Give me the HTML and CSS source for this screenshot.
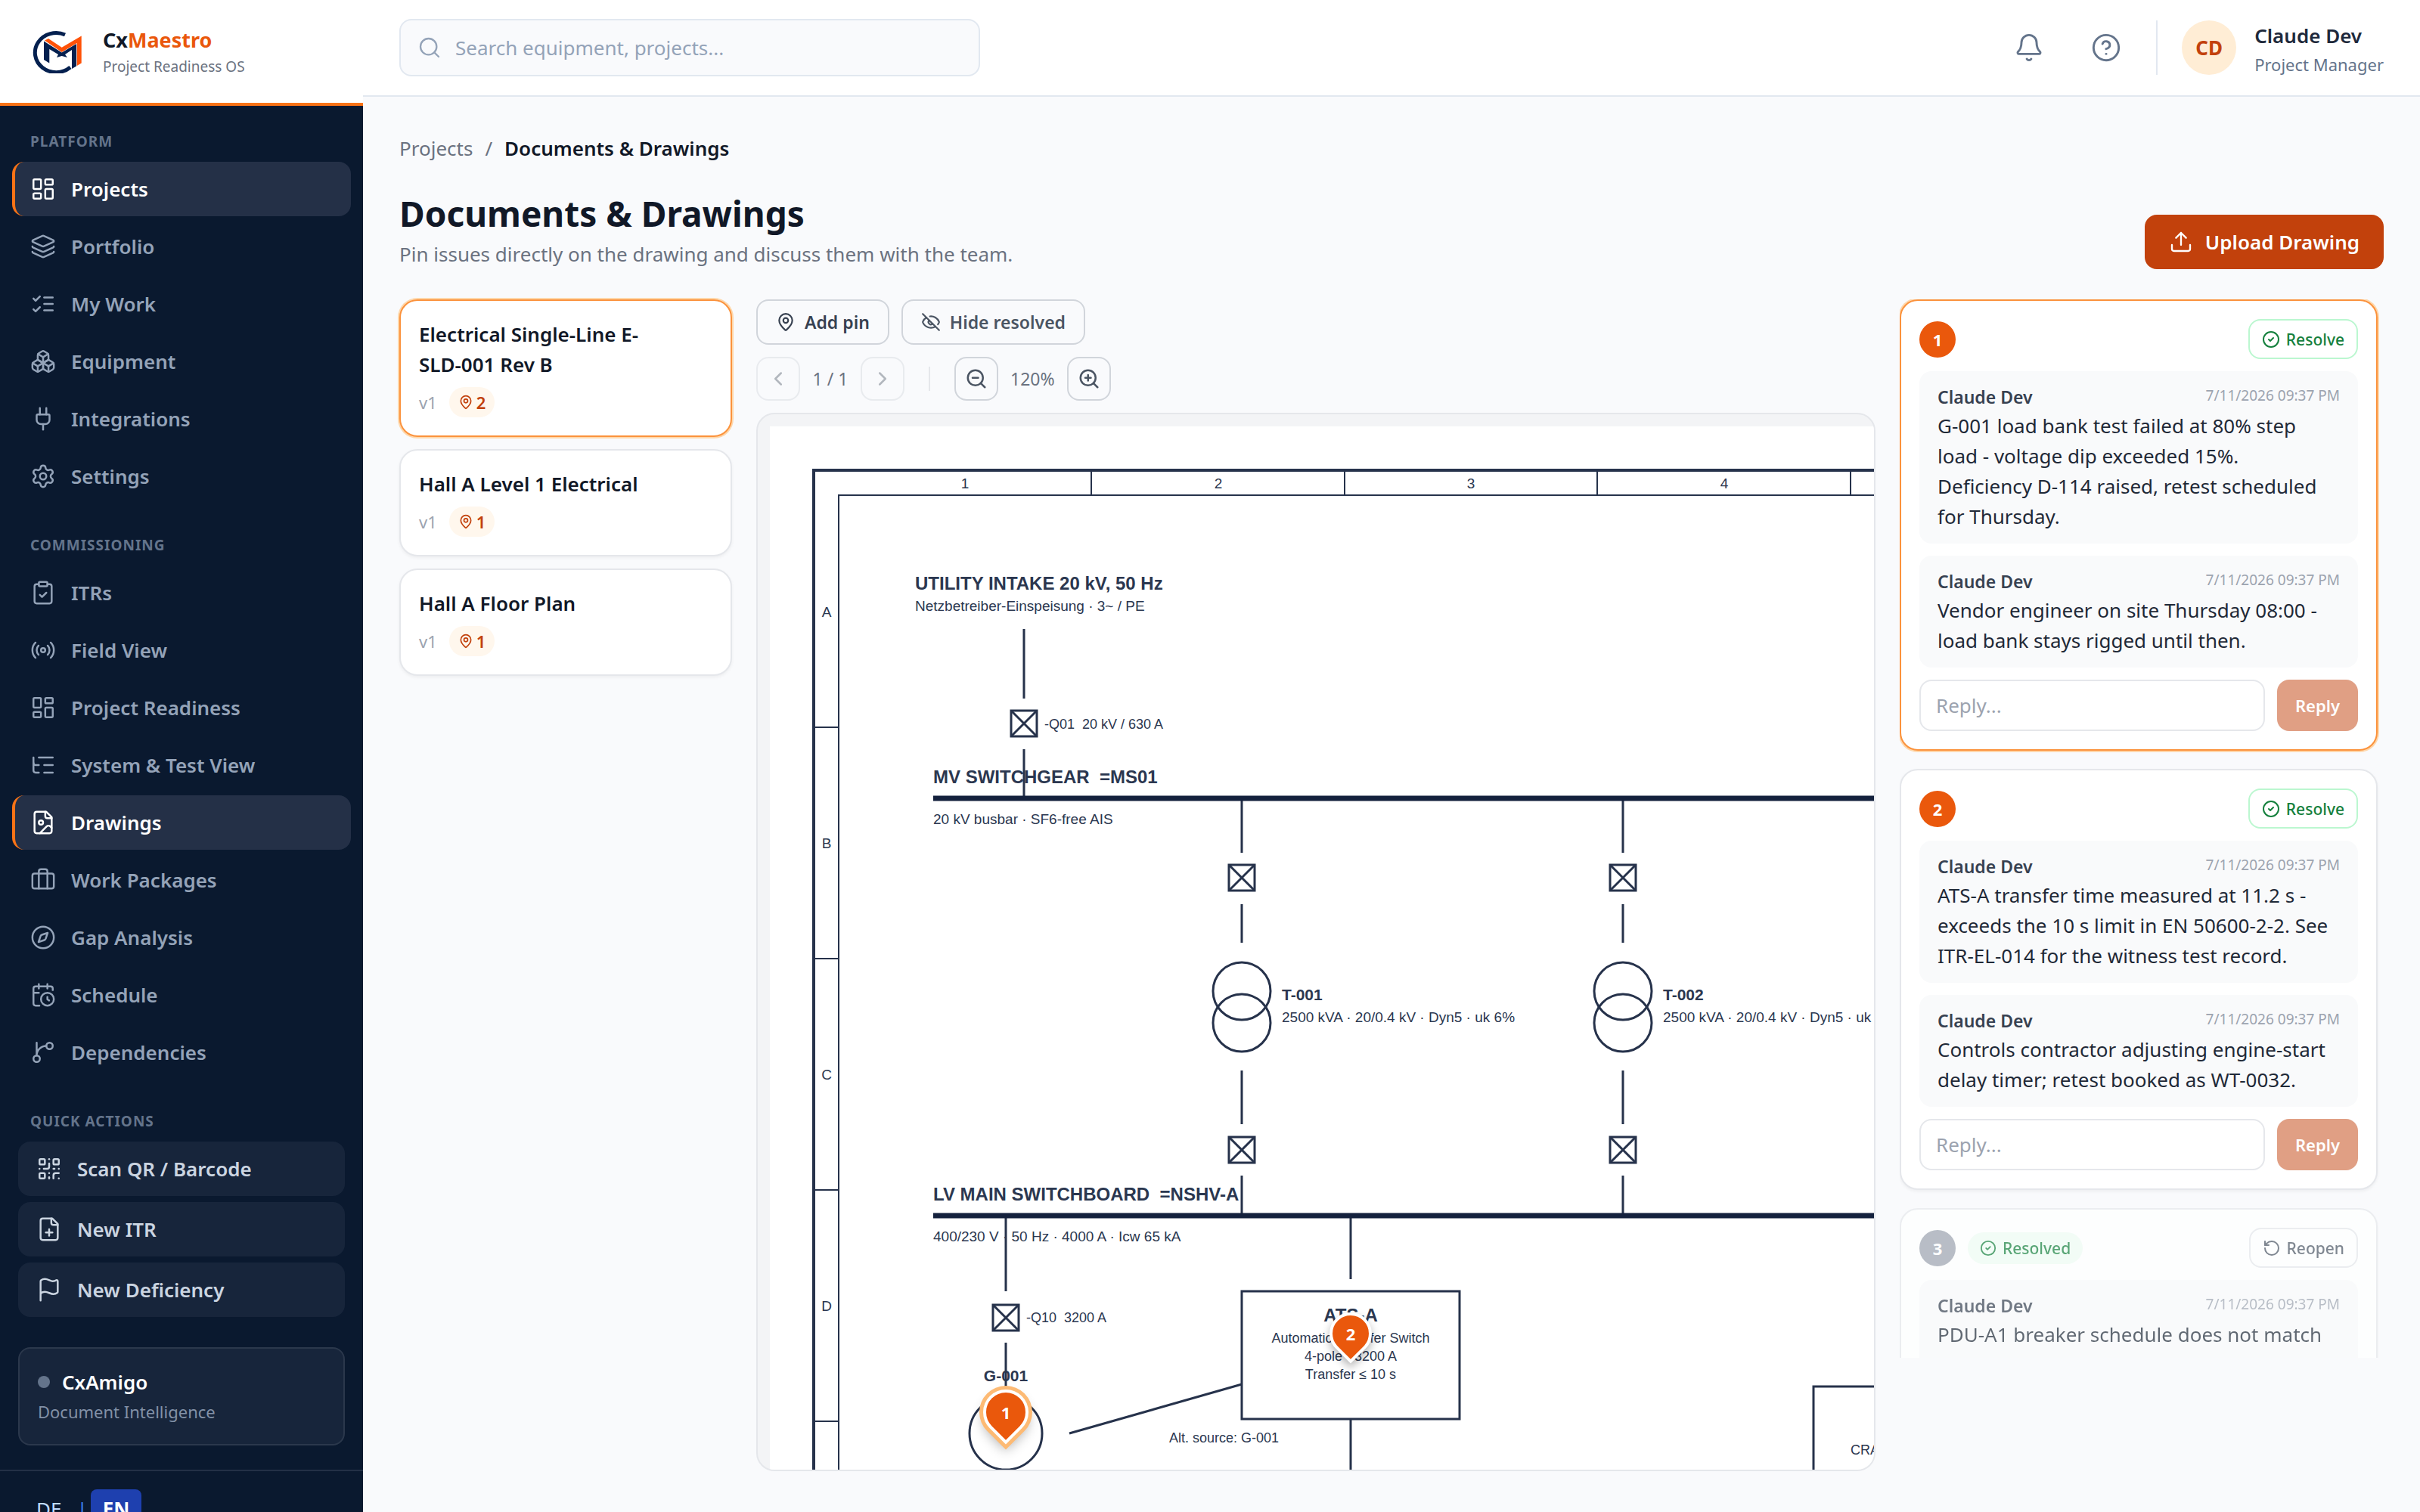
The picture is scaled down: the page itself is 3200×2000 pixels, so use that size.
FILE: index.html
```html
<!DOCTYPE html>
<html lang="en">
<head>
    <meta charset="UTF-8">
    <meta name="viewport" content="width=device-width, initial-scale=1.0">
    <title>CxMaestro - Documents &amp; Drawings</title>
    <link rel="stylesheet" href="styles.css">
</head>
<body>

<!-- icon sprite -->
<svg class="sprite" aria-hidden="true">
    <symbol id="i-dashboard" viewBox="0 0 24 24"><rect x="3" y="3" width="7" height="9" rx="1"/><rect x="14" y="3" width="7" height="5" rx="1"/><rect x="14" y="12" width="7" height="9" rx="1"/><rect x="3" y="16" width="7" height="5" rx="1"/></symbol>
    <symbol id="i-layers" viewBox="0 0 24 24"><path d="M12.83 2.18a2 2 0 0 0-1.66 0L2.6 6.08a1 1 0 0 0 0 1.83l8.58 3.91a2 2 0 0 0 1.66 0l8.58-3.9a1 1 0 0 0 0-1.83Z"/><path d="M2 12a1 1 0 0 0 .58.91l8.6 3.91a2 2 0 0 0 1.65 0l8.58-3.9A1 1 0 0 0 22 12"/><path d="M2 17a1 1 0 0 0 .58.91l8.6 3.91a2 2 0 0 0 1.65 0l8.58-3.9A1 1 0 0 0 22 17"/></symbol>
    <symbol id="i-checks" viewBox="0 0 24 24"><path d="m3 17 2 2 4-4"/><path d="m3 7 2 2 4-4"/><path d="M13 6h8"/><path d="M13 12h8"/><path d="M13 18h8"/></symbol>
    <symbol id="i-boxes" viewBox="0 0 24 24"><path d="M2.97 12.92A2 2 0 0 0 2 14.63v3.24a2 2 0 0 0 .97 1.71l3 1.8a2 2 0 0 0 2.06 0L12 19v-5.5l-5-3-4.03 2.42Z"/><path d="m7 16.5-4.74-2.85"/><path d="m7 16.5 5-3"/><path d="M7 16.5v5.17"/><path d="M12 13.5V19l3.97 2.38a2 2 0 0 0 2.06 0l3-1.8a2 2 0 0 0 .97-1.71v-3.24a2 2 0 0 0-.97-1.71L17 10.5l-5 3Z"/><path d="m17 16.5-5-3"/><path d="m17 16.5 4.74-2.85"/><path d="M17 16.5v5.17"/><path d="M7.97 4.42A2 2 0 0 0 7 6.13v4.37l5 3 5-3V6.13a2 2 0 0 0-.97-1.71l-3-1.8a2 2 0 0 0-2.06 0l-3 1.8Z"/><path d="M12 8 7.26 5.15"/><path d="m12 8 4.74-2.85"/><path d="M12 13.5V8"/></symbol>
    <symbol id="i-plug" viewBox="0 0 24 24"><path d="M12 22v-5"/><path d="M15 8V2"/><path d="M17 8a1 1 0 0 1 1 1v4a4 4 0 0 1-4 4h-4a4 4 0 0 1-4-4V9a1 1 0 0 1 1-1z"/><path d="M9 8V2"/></symbol>
    <symbol id="i-settings" viewBox="0 0 24 24"><path d="M9.671 4.136a2.34 2.34 0 0 1 4.659 0 2.34 2.34 0 0 0 3.319 1.915 2.34 2.34 0 0 1 2.33 4.033 2.34 2.34 0 0 0 0 3.831 2.34 2.34 0 0 1-2.33 4.033 2.34 2.34 0 0 0-3.319 1.915 2.34 2.34 0 0 1-4.659 0 2.34 2.34 0 0 0-3.32-1.915 2.34 2.34 0 0 1-2.33-4.033 2.34 2.34 0 0 0 0-3.831A2.34 2.34 0 0 1 6.35 6.051a2.34 2.34 0 0 0 3.319-1.915"/><circle cx="12" cy="12" r="3"/></symbol>
    <symbol id="i-clipboard" viewBox="0 0 24 24"><rect x="8" y="2" width="8" height="4" rx="1"/><path d="M16 4h2a2 2 0 0 1 2 2v14a2 2 0 0 1-2 2H6a2 2 0 0 1-2-2V6a2 2 0 0 1 2-2h2"/><path d="m9 14 2 2 4-4"/></symbol>
    <symbol id="i-radio" viewBox="0 0 24 24"><path d="M16.247 7.761a6 6 0 0 1 0 8.478"/><path d="M19.075 4.933a10 10 0 0 1 0 14.134"/><path d="M4.925 19.067a10 10 0 0 1 0-14.134"/><path d="M7.753 16.239a6 6 0 0 1 0-8.478"/><circle cx="12" cy="12" r="2"/></symbol>
    <symbol id="i-tree" viewBox="0 0 24 24"><path d="M8 5h13"/><path d="M13 12h8"/><path d="M13 19h8"/><path d="M3 10a2 2 0 0 0 2 2h3"/><path d="M3 5v12a2 2 0 0 0 2 2h3"/></symbol>
    <symbol id="i-file-image" viewBox="0 0 24 24"><path d="M15 2H6a2 2 0 0 0-2 2v16a2 2 0 0 0 2 2h12a2 2 0 0 0 2-2V7Z"/><path d="M14 2v4a2 2 0 0 0 2 2h4"/><circle cx="10" cy="12" r="2"/><path d="m20 17-1.296-1.296a2.41 2.41 0 0 0-3.408 0L9 22"/></symbol>
    <symbol id="i-briefcase" viewBox="0 0 24 24"><path d="M16 20V4a2 2 0 0 0-2-2h-4a2 2 0 0 0-2 2v16"/><rect x="2" y="6" width="20" height="14" rx="2"/></symbol>
    <symbol id="i-compass" viewBox="0 0 24 24"><circle cx="12" cy="12" r="10"/><path d="m16.24 7.76-1.804 5.411a2 2 0 0 1-1.265 1.265L7.76 16.24l1.804-5.411a2 2 0 0 1 1.265-1.265z"/></symbol>
    <symbol id="i-calendar" viewBox="0 0 24 24"><path d="M16 14v2.2l1.6 1"/><path d="M16 2v4"/><path d="M21 7.5V6a2 2 0 0 0-2-2H5a2 2 0 0 0-2 2v14a2 2 0 0 0 2 2h3.5"/><path d="M3 10h5"/><path d="M8 2v4"/><circle cx="16" cy="16" r="6"/></symbol>
    <symbol id="i-branch" viewBox="0 0 24 24"><path d="M15 6a9 9 0 0 0-9 9V3"/><circle cx="18" cy="6" r="3"/><circle cx="6" cy="18" r="3"/></symbol>
    <symbol id="i-qr" viewBox="0 0 24 24"><rect x="3" y="3" width="5" height="5" rx="1"/><rect x="16" y="3" width="5" height="5" rx="1"/><rect x="3" y="16" width="5" height="5" rx="1"/><path d="M21 16h-3a2 2 0 0 0-2 2v3"/><path d="M21 21v.01"/><path d="M12 7v3a2 2 0 0 1-2 2H7"/><path d="M3 12h.01"/><path d="M12 3h.01"/><path d="M12 16v.01"/><path d="M16 12h1"/><path d="M21 12v.01"/><path d="M12 21v-1"/></symbol>
    <symbol id="i-file-plus" viewBox="0 0 24 24"><path d="M15 2H6a2 2 0 0 0-2 2v16a2 2 0 0 0 2 2h12a2 2 0 0 0 2-2V7Z"/><path d="M14 2v4a2 2 0 0 0 2 2h4"/><path d="M9 15h6"/><path d="M12 18v-6"/></symbol>
    <symbol id="i-flag" viewBox="0 0 24 24"><path d="M4 22V4a1 1 0 0 1 .4-.8A6 6 0 0 1 8 2c3 0 5 2 7.333 2q2 0 3.067-.8A1 1 0 0 1 20 4v10a1 1 0 0 1-.4.8A6 6 0 0 1 16 16c-3 0-5-2-8-2a6 6 0 0 0-4 1.528"/></symbol>
    <symbol id="i-search" viewBox="0 0 24 24"><circle cx="11" cy="11" r="8"/><path d="m21 21-4.34-4.34"/></symbol>
    <symbol id="i-bell" viewBox="0 0 24 24"><path d="M10.268 21a2 2 0 0 0 3.464 0"/><path d="M3.262 15.326A1 1 0 0 0 4 17h16a1 1 0 0 0 .74-1.673C19.41 13.956 18 12.499 18 8A6 6 0 0 0 6 8c0 4.499-1.411 5.956-2.738 7.326"/></symbol>
    <symbol id="i-help" viewBox="0 0 24 24"><circle cx="12" cy="12" r="10"/><path d="M9.09 9a3 3 0 0 1 5.83 1c0 2-3 3-3 3"/><path d="M12 17h.01"/></symbol>
    <symbol id="i-upload" viewBox="0 0 24 24"><path d="M12 3v12"/><path d="m17 8-5-5-5 5"/><path d="M21 15v4a2 2 0 0 1-2 2H5a2 2 0 0 1-2-2v-4"/></symbol>
    <symbol id="i-pin" viewBox="0 0 24 24"><path d="M20 10c0 4.993-5.539 10.193-7.399 11.799a1 1 0 0 1-1.202 0C9.539 20.193 4 14.993 4 10a8 8 0 0 1 16 0"/><circle cx="12" cy="10" r="3"/></symbol>
    <symbol id="i-eye-off" viewBox="0 0 24 24"><path d="M10.733 5.076a10.744 10.744 0 0 1 11.205 6.575 1 1 0 0 1 0 .696 10.747 10.747 0 0 1-1.444 2.49"/><path d="M14.084 14.158a3 3 0 0 1-4.242-4.242"/><path d="M17.479 17.499a10.75 10.75 0 0 1-15.417-5.151 1 1 0 0 1 0-.696 10.75 10.75 0 0 1 4.446-5.143"/><path d="m2 2 20 20"/></symbol>
    <symbol id="i-left" viewBox="0 0 24 24"><path d="m15 18-6-6 6-6"/></symbol>
    <symbol id="i-right" viewBox="0 0 24 24"><path d="m9 18 6-6-6-6"/></symbol>
    <symbol id="i-zoom-out" viewBox="0 0 24 24"><circle cx="11" cy="11" r="8"/><path d="m21 21-4.35-4.35"/><path d="M8 11h6"/></symbol>
    <symbol id="i-zoom-in" viewBox="0 0 24 24"><circle cx="11" cy="11" r="8"/><path d="m21 21-4.35-4.35"/><path d="M8 11h6"/><path d="M11 8v6"/></symbol>
    <symbol id="i-check" viewBox="0 0 24 24"><circle cx="12" cy="12" r="10"/><path d="m9 12 2 2 4-4"/></symbol>
    <symbol id="i-reopen" viewBox="0 0 24 24"><path d="M3 12a9 9 0 1 0 9-9 9.75 9.75 0 0 0-6.74 2.74L3 8"/><path d="M3 3v5h5"/></symbol>
</svg>

<div class="app">
    <aside class="sidebar">
        <div class="brand">
            <svg class="brand-logo" viewBox="0 0 66 58">
                <path d="M44 7A28 26 0 1 0 51 50" fill="none" stroke="#04204f" stroke-width="5"/>
                <path d="M16 15.5 39.7 30.5 59 19V48.5L53 52V27L44 33 47 37 39.7 35 33 37 35 33 23.3 26V44.5L16 40Z" fill="#04204f"/>
                <path d="M17 14.5 22 12 39.7 23.7 65.7 8.5V44.5L59.7 48V18L39.7 30Z" fill="#ff5208"/>
            </svg>
            <div>
                <div class="brand-name">Cx<span>Maestro</span></div>
                <div class="brand-sub">Project Readiness OS</div>
            </div>
        </div>

        <nav class="nav">
            <h2 class="nav-label">Platform</h2>
            <a class="nav-item active" href="#"><svg class="icon"><use href="#i-dashboard"/></svg>Projects</a>
            <a class="nav-item" href="#"><svg class="icon"><use href="#i-layers"/></svg>Portfolio</a>
            <a class="nav-item" href="#"><svg class="icon"><use href="#i-checks"/></svg>My Work</a>
            <a class="nav-item" href="#"><svg class="icon"><use href="#i-boxes"/></svg>Equipment</a>
            <a class="nav-item" href="#"><svg class="icon"><use href="#i-plug"/></svg>Integrations</a>
            <a class="nav-item" href="#"><svg class="icon"><use href="#i-settings"/></svg>Settings</a>
        </nav>

        <nav class="nav">
            <h2 class="nav-label">Commissioning</h2>
            <a class="nav-item" href="#"><svg class="icon"><use href="#i-clipboard"/></svg>ITRs</a>
            <a class="nav-item" href="#"><svg class="icon"><use href="#i-radio"/></svg>Field View</a>
            <a class="nav-item" href="#"><svg class="icon"><use href="#i-dashboard"/></svg>Project Readiness</a>
            <a class="nav-item" href="#"><svg class="icon"><use href="#i-tree"/></svg>System &amp; Test View</a>
            <a class="nav-item active" href="#"><svg class="icon"><use href="#i-file-image"/></svg>Drawings</a>
            <a class="nav-item" href="#"><svg class="icon"><use href="#i-briefcase"/></svg>Work Packages</a>
            <a class="nav-item" href="#"><svg class="icon"><use href="#i-compass"/></svg>Gap Analysis</a>
            <a class="nav-item" href="#"><svg class="icon"><use href="#i-calendar"/></svg>Schedule</a>
            <a class="nav-item" href="#"><svg class="icon"><use href="#i-branch"/></svg>Dependencies</a>
        </nav>

        <div class="quick">
            <h2 class="nav-label">Quick Actions</h2>
            <button class="quick-btn" type="button"><svg class="icon"><use href="#i-qr"/></svg>Scan QR / Barcode</button>
            <button class="quick-btn" type="button"><svg class="icon"><use href="#i-file-plus"/></svg>New ITR</button>
            <button class="quick-btn" type="button"><svg class="icon"><use href="#i-flag"/></svg>New Deficiency</button>
        </div>

        <div class="amigo">
            <div class="amigo-name"><span class="dot"></span>CxAmigo</div>
            <div class="amigo-sub">Document Intelligence</div>
        </div>

        <div class="lang">
            <button class="lang-btn" type="button">DE</button>
            <span class="lang-sep">|</span>
            <button class="lang-btn active" type="button">EN</button>
        </div>
    </aside>

    <div class="page">
        <header class="topbar">
            <label class="search">
                <svg class="icon"><use href="#i-search"/></svg>
                <input type="text" placeholder="Search equipment, projects..." aria-label="Search">
            </label>
            <div class="topbar-right">
                <button class="icon-btn" type="button" aria-label="Notifications"><svg class="icon"><use href="#i-bell"/></svg></button>
                <button class="icon-btn" type="button" aria-label="Help"><svg class="icon"><use href="#i-help"/></svg></button>
                <div class="user">
                    <span class="avatar">CD</span>
                    <div class="user-text">
                        <div class="user-name">Claude Dev</div>
                        <div class="user-role">Project Manager</div>
                    </div>
                </div>
            </div>
        </header>

        <main class="content">
            <div class="breadcrumb"><a href="#">Projects</a><span>/</span><strong>Documents &amp; Drawings</strong></div>

            <div class="page-head">
                <div>
                    <h1>Documents &amp; Drawings</h1>
                    <p>Pin issues directly on the drawing and discuss them with the team.</p>
                </div>
                <button class="upload-btn" type="button"><svg class="icon"><use href="#i-upload"/></svg>Upload Drawing</button>
            </div>

            <div class="columns">
                <div class="docs">
                    <button class="doc selected" type="button">
                        <span class="doc-title">Electrical Single-Line E-<wbr><span class="nowrap">SLD-001 Rev B</span></span>
                        <span class="doc-meta">v1 <span class="doc-pins"><svg class="icon"><use href="#i-pin"/></svg>2</span></span>
                    </button>
                    <button class="doc" type="button">
                        <span class="doc-title">Hall A Level 1 Electrical</span>
                        <span class="doc-meta">v1 <span class="doc-pins"><svg class="icon"><use href="#i-pin"/></svg>1</span></span>
                    </button>
                    <button class="doc" type="button">
                        <span class="doc-title">Hall A Floor Plan</span>
                        <span class="doc-meta">v1 <span class="doc-pins"><svg class="icon"><use href="#i-pin"/></svg>1</span></span>
                    </button>
                </div>

                <section class="viewer">
                    <div class="tools">
                        <button class="tool-btn dark" type="button"><svg class="icon"><use href="#i-pin"/></svg>Add pin</button>
                        <button class="tool-btn" type="button"><svg class="icon"><use href="#i-eye-off"/></svg>Hide resolved</button>
                    </div>
                    <div class="tools">
                        <button class="square-btn" type="button" aria-label="Previous page" disabled><svg class="icon"><use href="#i-left"/></svg></button>
                        <span class="tool-text">1 / 1</span>
                        <button class="square-btn" type="button" aria-label="Next page" disabled><svg class="icon"><use href="#i-right"/></svg></button>
                        <span class="tool-sep"></span>
                        <button class="square-btn" type="button" aria-label="Zoom out"><svg class="icon"><use href="#i-zoom-out"/></svg></button>
                        <span class="tool-text">120%</span>
                        <button class="square-btn" type="button" aria-label="Zoom in"><svg class="icon"><use href="#i-zoom-in"/></svg></button>
                    </div>

                    <div class="canvas">
                        <div class="sheet">
                            <svg class="drawing" viewBox="0 0 2200 1600" width="2200" height="1600">
                                <defs>
                                    <g id="breaker"><rect x="-17" y="-17" width="34" height="34"/><path d="M-17-17 17 17M17-17-17 17"/></g>
                                    <g id="feeder">
                                        <path d="M0 494V564M0 632V683M0 852V923M0 991V1044"/>
                                        <use href="#breaker" y="597"/>
                                        <circle cy="747" r="38"/>
                                        <circle cy="789" r="38"/>
                                        <use href="#breaker" y="957"/>
                                    </g>
                                </defs>

                                <!-- frame and grid references -->
                                <path class="frame" d="M58 1600V58H2200"/>
                                <path class="thin" d="M91 1600V91H2200"/>
                                <path class="thin" d="M425 58V91M760 58V91M1094 58V91M1429 58V91M58 398H91M58 704H91M58 1010H91M58 1316H91"/>
                                <g class="t-ref">
                                    <text x="258" y="82">1</text><text x="593" y="82">2</text><text x="927" y="82">3</text><text x="1262" y="82">4</text>
                                    <text x="75" y="252">A</text><text x="75" y="558">B</text><text x="75" y="864">C</text><text x="75" y="1170">D</text>
                                </g>

                                <!-- lines and symbols -->
                                <g class="wire">
                                    <path d="M336 268V360M336 427V490"/>
                                    <use href="#breaker" x="336" y="393"/>
                                    <use href="#feeder" x="624"/>
                                    <use href="#feeder" x="1128"/>
                                    <path d="M312 1046V1144M312 1212V1283"/>
                                    <use href="#breaker" x="312" y="1179"/>
                                    <circle cx="312" cy="1332" r="48"/>
                                    <path d="M768 1046V1128M768 1313V1600M396 1332 624 1267"/>
                                    <rect x="624" y="1144" width="288" height="169"/>
                                    <rect x="1380" y="1270" width="288" height="169"/>
                                </g>
                                <path class="bus" d="M216 492H2100M216 1044H2100"/>

                                <g class="t-head">
                                    <text x="192" y="216">UTILITY INTAKE 20 kV, 50 Hz</text>
                                    <text x="216" y="472">MV SWITCHGEAR &#160;=MS01</text>
                                    <text x="216" y="1024">LV MAIN SWITCHBOARD &#160;=NSHV-A</text>
                                    <text class="mid" x="768" y="1184">ATS-A</text>
                                </g>
                                <g class="t-name">
                                    <text x="677" y="759">T-001</text>
                                    <text x="1181" y="759">T-002</text>
                                    <text class="mid" x="312" y="1263">G-001</text>
                                </g>
                                <g class="t-note">
                                    <text x="192" y="244">Netzbetreiber-Einspeisung · 3~ / PE</text>
                                    <text x="216" y="526">20 kV busbar · SF6-free AIS</text>
                                    <text x="677" y="788">2500 kVA · 20/0.4 kV · Dyn5 · uk 6%</text>
                                    <text x="1181" y="788">2500 kVA · 20/0.4 kV · Dyn5 · uk 6%</text>
                                    <text x="216" y="1078">400/230 V · 50 Hz · 4000 A · Icw 65 kA</text>
                                </g>
                                <g class="t-small">
                                    <text x="363" y="400">-Q01 &#160;20 kV / 630 A</text>
                                    <text x="339" y="1185">-Q10 &#160;3200 A</text>
                                    <text class="mid" x="768" y="1212">Automatic Transfer Switch</text>
                                    <text class="mid" x="768" y="1236">4-pole · 3200 A</text>
                                    <text class="mid" x="768" y="1260">Transfer ≤ 10 s</text>
                                    <text x="528" y="1344">Alt. source: G-001</text>
                                    <text x="1429" y="1360">CRAC units</text>
                                </g>
                            </svg>
                            <button class="pin pin-one selected" type="button"><span>1</span></button>
                            <button class="pin pin-two" type="button"><span>2</span></button>
                        </div>
                    </div>
                </section>

                <div class="threads">
                    <article class="thread selected">
                        <div class="thread-head">
                            <span class="num">1</span>
                            <button class="state-btn resolve" type="button"><svg class="icon"><use href="#i-check"/></svg>Resolve</button>
                        </div>
                        <div class="comment">
                            <div class="comment-head"><strong>Claude Dev</strong><time>7/11/2026 09:37 PM</time></div>
                            <p>G-001 load bank test failed at 80% step load - voltage dip exceeded 15%. Deficiency D-114 raised, retest scheduled for Thursday.</p>
                        </div>
                        <div class="comment">
                            <div class="comment-head"><strong>Claude Dev</strong><time>7/11/2026 09:37 PM</time></div>
                            <p>Vendor engineer on site Thursday 08:00 - load bank stays rigged until then.</p>
                        </div>
                        <form class="reply">
                            <input type="text" placeholder="Reply..." aria-label="Reply to issue 1">
                            <button type="button" disabled>Reply</button>
                        </form>
                    </article>

                    <article class="thread">
                        <div class="thread-head">
                            <span class="num">2</span>
                            <button class="state-btn resolve" type="button"><svg class="icon"><use href="#i-check"/></svg>Resolve</button>
                        </div>
                        <div class="comment">
                            <div class="comment-head"><strong>Claude Dev</strong><time>7/11/2026 09:37 PM</time></div>
                            <p>ATS-A transfer time measured at 11.2 s - exceeds the 10 s limit in EN 50600-2-2. See ITR-EL-014 for the witness test record.</p>
                        </div>
                        <div class="comment">
                            <div class="comment-head"><strong>Claude Dev</strong><time>7/11/2026 09:37 PM</time></div>
                            <p>Controls contractor adjusting engine-start delay timer; retest booked as WT-0032.</p>
                        </div>
                        <form class="reply">
                            <input type="text" placeholder="Reply..." aria-label="Reply to issue 2">
                            <button type="button" disabled>Reply</button>
                        </form>
                    </article>

                    <article class="thread resolved">
                        <div class="thread-head">
                            <span class="num">3</span>
                            <span class="resolved-tag"><svg class="icon"><use href="#i-check"/></svg>Resolved</span>
                            <button class="state-btn" type="button"><svg class="icon"><use href="#i-reopen"/></svg>Reopen</button>
                        </div>
                        <div class="comment">
                            <div class="comment-head"><strong>Claude Dev</strong><time>7/11/2026 09:37 PM</time></div>
                            <p>PDU-A1 breaker schedule does not match panel labelling - revision A issued.</p>
                        </div>
                    </article>
                </div>
            </div>
        </main>
    </div>
</div>

</body>
</html>
```
FILE: styles.css
```css
* {
    box-sizing: border-box;
}
body {
    margin: 0;
    font-family: "Noto Sans", "Open Sans", sans-serif;
    font-size: 26px;
    line-height: 40px;
    color: #111827;
    background-color: #f9fafc;
}
h1, h2, p {
    margin: 0;
}
a {
    color: inherit;
    text-decoration: none;
}
button, input {
    font: inherit;
    color: inherit;
    margin: 0;
}
button {
    border: none;
    background: none;
    padding: 0;
    text-align: left;
}
.sprite {
    display: none;
}
.nowrap {
    white-space: nowrap;
}
.icon {
    width: 34px;
    height: 34px;
    flex: none;
    fill: none;
    stroke: currentColor;
    stroke-width: 1.75;
    stroke-linecap: round;
    stroke-linejoin: round;
}
.app {
    display: flex;
    height: 100vh;
    overflow: hidden;
}

/* sidebar */
.sidebar {
    width: 480px;
    flex: none;
    display: flex;
    flex-direction: column;
    overflow: hidden;
    background-color: #0a192f;
}
.sidebar > * {
    flex: none;
}
.brand {
    height: 140px;
    display: flex;
    align-items: center;
    gap: 28px;
    padding: 0 42px;
    background-color: #fff;
    border-bottom: 4px solid #f97316;
}
.brand-logo {
    width: 66px;
    height: 58px;
}
.brand-name {
    font-size: 27px;
    font-weight: 700;
    line-height: 40px;
}
.brand-name span {
    color: #ea580c;
}
.brand-sub {
    font-size: 19px;
    line-height: 30px;
    color: #6b7280;
}
.nav {
    display: flex;
    flex-direction: column;
    gap: 4px;
    padding: 0 16px 8px;
    margin-top: 32px;
}
.nav-label {
    font-size: 19px;
    line-height: 30px;
    font-weight: 700;
    letter-spacing: 1px;
    text-transform: uppercase;
    color: #64748b;
    padding: 0 24px 8px;
}
.nav-item {
    height: 72px;
    display: flex;
    align-items: center;
    gap: 20px;
    padding: 0 20px;
    border-left: 4px solid transparent;
    border-radius: 16px;
    font-weight: 600;
    color: #94a3b8;
}
.nav-item.active {
    color: #fff;
    background-color: #243047;
    border-left-color: #f97316;
}
.quick {
    display: flex;
    flex-direction: column;
    gap: 8px;
    padding: 0 24px;
    margin-top: 32px;
}
.quick .nav-label {
    padding: 0 16px 4px;
}
.quick-btn {
    height: 72px;
    display: flex;
    align-items: center;
    gap: 20px;
    padding: 0 24px;
    border-radius: 16px;
    font-weight: 600;
    color: #cbd5e1;
    background-color: #17253b;
}
.amigo {
    margin: 40px 24px 32px;
    padding: 24px;
    border: 2px solid #2b384c;
    border-radius: 16px;
    background-color: #17253b;
}
.amigo-name {
    display: flex;
    align-items: center;
    gap: 16px;
    font-weight: 600;
    color: #fff;
}
.dot {
    width: 16px;
    height: 16px;
    border-radius: 50%;
    background-color: #64748b;
}
.amigo-sub {
    font-size: 22px;
    line-height: 38px;
    color: #8291a7;
}
.lang {
    display: flex;
    align-items: center;
    gap: 4px;
    padding: 24px 32px;
    border-top: 2px solid #233046;
    line-height: 36px;
    color: #3b82f6;
}
.lang-btn {
    padding: 8px 16px;
    border-radius: 8px;
    color: #bfdbfe;
}
.lang-btn.active {
    font-weight: 700;
    color: #fff;
    background-color: #1e40af;
}

/* top bar */
.page {
    flex: 1;
    min-width: 0;
    display: flex;
    flex-direction: column;
}
.topbar {
    height: 128px;
    flex: none;
    display: flex;
    align-items: center;
    justify-content: space-between;
    padding: 0 48px;
    background-color: #fff;
    border-bottom: 2px solid #e2e8f0;
}
.search {
    width: 768px;
    height: 76px;
    display: flex;
    align-items: center;
    gap: 18px;
    padding: 0 22px;
    border: 2px solid #e2e8f0;
    border-radius: 16px;
    background-color: #f9fafc;
    color: #94a3b8;
}
.search .icon {
    width: 32px;
    height: 32px;
}
.search input {
    flex: 1;
    border: none;
    outline: none;
    padding: 0;
    background: none;
}
input::placeholder {
    color: #94a3b8;
    opacity: 1;
}
.topbar-right {
    display: flex;
    align-items: center;
}
.icon-btn {
    display: flex;
    padding: 16px;
    margin-right: 30px;
    color: #64748b;
}
.icon-btn .icon {
    width: 40px;
    height: 40px;
}
.user {
    height: 72px;
    display: flex;
    align-items: center;
    gap: 24px;
    padding-left: 32px;
    border-left: 2px solid #e2e8f0;
}
.avatar {
    width: 72px;
    height: 72px;
    display: flex;
    align-items: center;
    justify-content: center;
    border-radius: 50%;
    font-weight: 700;
    color: #c2410c;
    background-color: #ffedd5;
}
.user-text {
    padding-top: 4px;
}
.user-name {
    font-weight: 600;
    color: #1e293b;
}
.user-role {
    font-size: 22px;
    line-height: 36px;
    color: #64748b;
}

/* content */
.content {
    flex: 1;
    min-height: 0;
    padding: 48px;
}
.breadcrumb {
    display: flex;
    gap: 16px;
    color: #6b7280;
}
.breadcrumb strong {
    font-weight: 600;
    color: #111827;
}
.page-head {
    display: flex;
    align-items: flex-end;
    justify-content: space-between;
    margin: 32px 0 40px;
}
h1 {
    font-size: 46px;
    line-height: 68px;
    font-weight: 700;
}
.page-head p {
    color: #6b7280;
}
.upload-btn {
    height: 72px;
    display: flex;
    align-items: center;
    gap: 16px;
    padding: 0 32px;
    border-radius: 16px;
    font-weight: 600;
    color: #fff;
    background-color: #c2410c;
}
.upload-btn .icon {
    width: 32px;
    height: 32px;
}
.columns {
    display: grid;
    grid-template-columns: 440px 1fr 640px;
    gap: 32px;
    align-items: start;
}

/* drawing list */
.docs {
    display: flex;
    flex-direction: column;
    gap: 16px;
}
.doc {
    display: flex;
    flex-direction: column;
    gap: 10px;
    padding: 24px;
    border: 2px solid #e5e7eb;
    border-radius: 24px;
    background-color: #fff;
    box-shadow: 0 2px 4px rgba(0, 0, 0, 0.05);
}
.doc.selected {
    border-color: #fb923c;
    box-shadow: 0 0 0 2px #fed7aa;
}
.doc-title {
    font-weight: 600;
}
.doc-meta {
    display: flex;
    align-items: center;
    gap: 16px;
    font-size: 22px;
    color: #9ca3af;
}
.doc-pins {
    display: flex;
    align-items: center;
    gap: 4px;
    padding: 0 12px;
    border-radius: 20px;
    font-weight: 600;
    color: #c2410c;
    background-color: #fff7ed;
}
.doc-pins .icon {
    width: 20px;
    height: 20px;
    stroke-width: 2;
}

/* viewer */
.viewer {
    min-width: 0;
    display: flex;
    flex-direction: column;
    gap: 16px;
}
.tools {
    display: flex;
    align-items: center;
    gap: 16px;
}
.tool-btn {
    height: 60px;
    display: flex;
    align-items: center;
    gap: 12px;
    padding: 0 24px;
    border: 2px solid #d1d5db;
    border-radius: 16px;
    font-size: 23px;
    font-weight: 600;
    color: #4b5563;
}
.tool-btn.dark {
    color: #374151;
}
.tool-btn .icon {
    width: 26px;
    height: 26px;
    stroke-width: 2;
}
.square-btn {
    width: 58px;
    height: 58px;
    display: flex;
    align-items: center;
    justify-content: center;
    border: 2px solid #d1d5db;
    border-radius: 16px;
    color: #4b5563;
}
.square-btn:disabled {
    opacity: 0.4;
}
.square-btn .icon {
    width: 30px;
    height: 30px;
    stroke-width: 2;
}
.tool-text {
    min-width: 48px;
    font-size: 23px;
    text-align: center;
    color: #6b7280;
}
.tool-sep {
    width: 2px;
    height: 32px;
    margin: 0 16px;
    background-color: #e5e7eb;
}
.canvas {
    height: 1400px;
    padding: 16px;
    overflow: hidden;
    border: 2px solid #e5e7eb;
    border-radius: 24px;
    background-color: #f3f4f6;
}
.sheet {
    position: relative;
    width: 2200px;
    background-color: #fff;
}
.drawing {
    display: block;
    font-family: "Liberation Sans", Arial, sans-serif;
    fill: #2b3750;
}
.frame, .thin, .wire, .bus {
    fill: none;
    stroke: #26324b;
}
.frame {
    stroke-width: 4;
}
.thin {
    stroke-width: 2;
}
.wire {
    stroke-width: 3;
}
.bus {
    stroke: #14213d;
    stroke-width: 7;
}
.t-ref {
    font-size: 19px;
    text-anchor: middle;
}
.t-head {
    font-size: 24px;
    font-weight: 700;
}
.t-name {
    font-size: 21px;
    font-weight: 700;
}
.t-note {
    font-size: 19px;
}
.t-small {
    font-size: 18px;
}
.mid {
    text-anchor: middle;
}
/* pins sit on the free drawing surface, placed by their centre */
.pin {
    position: absolute;
    width: 56px;
    height: 56px;
    margin: -28px 0 0 -28px;
    border: 4px solid #fff;
    border-radius: 50% 50% 0 50%;
    transform: rotate(45deg);
    background-color: #ea580c;
    box-shadow: 4px 4px 12px rgba(0, 0, 0, 0.3);
}
.pin span {
    display: block;
    transform: rotate(-45deg);
    font-size: 22px;
    line-height: 48px;
    font-weight: 700;
    text-align: center;
    color: #fff;
}
.pin.selected {
    width: 60px;
    height: 60px;
    margin: -30px 0 0 -30px;
    box-shadow: 0 0 0 5px #fdba74, 6px 6px 16px rgba(0, 0, 0, 0.3);
}
.pin.selected span {
    line-height: 52px;
}
.pin-one {
    left: 312px;
    top: 1304px;
}
.pin-two {
    left: 768px;
    top: 1200px;
}

/* issue threads */
.threads {
    height: 1400px;
    display: flex;
    flex-direction: column;
    gap: 24px;
    padding-right: 8px;
    overflow: hidden;
}
.thread {
    flex: none;
    display: flex;
    flex-direction: column;
    gap: 16px;
    padding: 24px;
    border: 2px solid #e5e7eb;
    border-radius: 24px;
    background-color: #fff;
    box-shadow: 0 2px 4px rgba(0, 0, 0, 0.05);
}
.thread.selected {
    border-color: #fb923c;
    box-shadow: 0 0 0 2px #fed7aa;
}
.thread.resolved {
    opacity: 0.7;
}
.thread-head {
    display: flex;
    align-items: center;
    gap: 16px;
}
.num {
    width: 48px;
    height: 48px;
    border-radius: 50%;
    font-size: 22px;
    line-height: 48px;
    font-weight: 700;
    text-align: center;
    color: #fff;
    background-color: #ea580c;
}
.resolved .num {
    background-color: #9ca3af;
}
.resolved-tag {
    display: flex;
    align-items: center;
    gap: 8px;
    padding: 0 16px;
    border-radius: 21px;
    font-size: 21px;
    line-height: 42px;
    font-weight: 500;
    color: #15803d;
    background-color: #f0fdf4;
}
.resolved-tag .icon {
    width: 22px;
    height: 22px;
    stroke-width: 2;
}
.state-btn {
    height: 53px;
    display: flex;
    align-items: center;
    gap: 8px;
    padding: 0 16px;
    margin-left: auto;
    border: 2px solid #e5e7eb;
    border-radius: 16px;
    font-size: 21px;
    font-weight: 500;
    color: #4b5563;
}
.state-btn.resolve {
    color: #15803d;
    border-color: #bbf7d0;
}
.state-btn .icon {
    width: 24px;
    height: 24px;
    stroke-width: 2;
}
.comment {
    padding: 16px 24px;
    border-radius: 16px;
    background-color: #f9fafb;
}
.comment-head {
    display: flex;
    justify-content: space-between;
    line-height: 36px;
}
.comment-head strong {
    font-size: 23px;
    font-weight: 600;
    color: #374151;
}
.comment-head time {
    font-size: 19px;
    line-height: 32px;
    color: #9ca3af;
}
.comment p {
    padding-right: 8px;
    color: #1f2937;
}
.reply {
    display: flex;
    gap: 16px;
}
.reply input {
    flex: 1;
    min-width: 0;
    height: 68px;
    padding: 0 20px;
    border: 2px solid #e5e7eb;
    border-radius: 16px;
    background-color: #fff;
}
.reply input::placeholder {
    color: #9ca3af;
}
.reply button {
    padding: 0 24px;
    border-radius: 16px;
    font-size: 22px;
    font-weight: 600;
    color: #fff;
    background-color: #c2410c;
}
.reply button:disabled {
    opacity: 0.5;
}
```
